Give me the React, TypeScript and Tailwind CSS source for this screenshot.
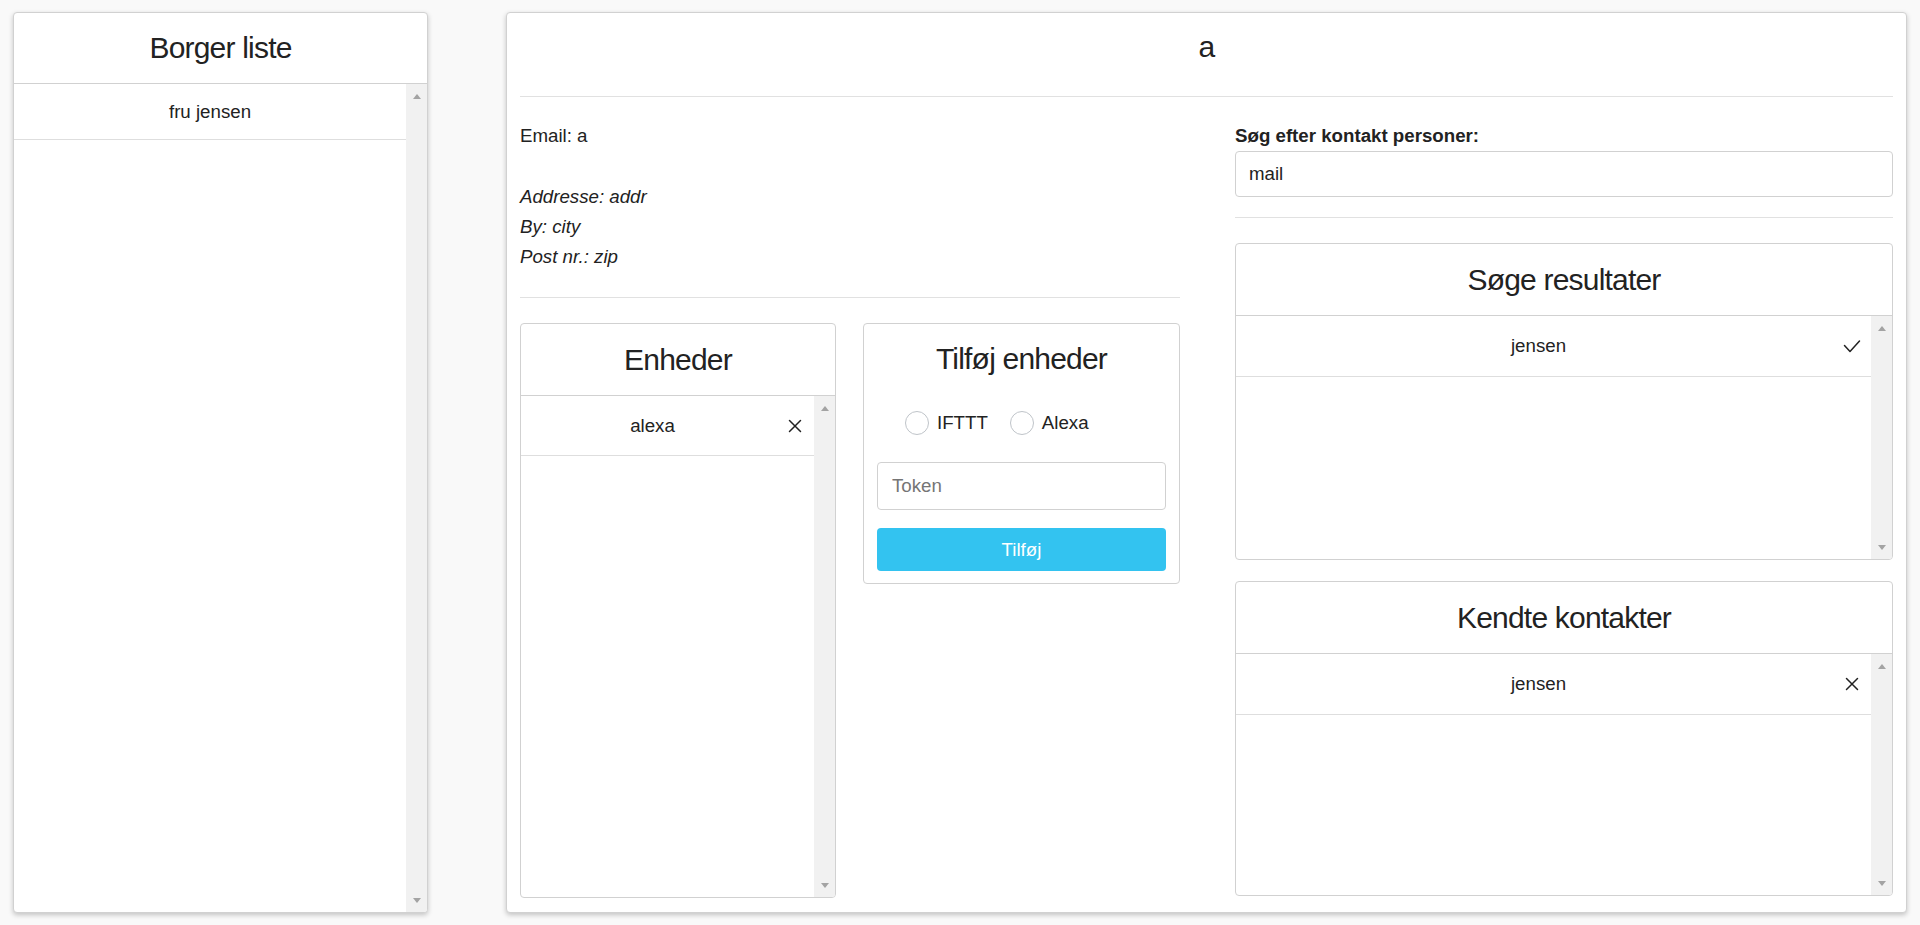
import React from "react";

type RowIcon = "remove" | "check" | null;

type ListItem = {
  id: string;
  name: string;
  icon: RowIcon;
};

const borgere: ListItem[] = [{ id: "b1", name: "fru jensen", icon: null }];
const enheder: ListItem[] = [{ id: "e1", name: "alexa", icon: "remove" }];
const soegeResultater: ListItem[] = [{ id: "s1", name: "jensen", icon: "check" }];
const kendteKontakter: ListItem[] = [{ id: "k1", name: "jensen", icon: "remove" }];

function RemoveIcon() {
  return (
    <svg viewBox="0 0 14 14" fill="none" aria-hidden="true" className="h-[14px] w-[14px]">
      <path d="M1.5 1.5 12.5 12.5M12.5 1.5 1.5 12.5" stroke="#222" strokeWidth="1.5" strokeLinecap="round" />
    </svg>
  );
}

function CheckIcon() {
  return (
    <svg viewBox="0 0 18 14" fill="none" aria-hidden="true" className="h-[14px] w-[18px]">
      <path d="M1.5 6.5 7 12.5 16.5 2" stroke="#222" strokeWidth="1.5" strokeLinecap="round" strokeLinejoin="round" />
    </svg>
  );
}

// Fake scrollbar — headless chrome hides real ones
function Scrollbar() {
  return (
    <div className="flex w-[21px] shrink-0 flex-col items-center justify-between bg-[#f1f1f1] pb-[9px] pt-[10px]">
      <span className="h-0 w-0 border-x-[4.5px] border-b-[5px] border-x-transparent border-b-[#a3a3a3]" />
      <span className="h-0 w-0 border-x-[4.5px] border-t-[5px] border-x-transparent border-t-[#a3a3a3]" />
    </div>
  );
}

function ListPanel({
  title,
  items,
  className,
  rowClassName = "",
}: {
  title: string;
  items: ListItem[];
  className: string;
  rowClassName?: string;
}) {
  return (
    <div className={`flex flex-col overflow-hidden rounded-[4px] border border-[#d1d1d1] bg-white ${className}`}>
      <div className="flex h-[72px] shrink-0 items-center justify-center border-b border-[#d1d1d1] text-[30px] leading-[40px] tracking-[-0.8px]">
        {title}
      </div>
      <div className="flex min-h-0 flex-1">
        <div className="flex-1">
          {items.map((item) => (
            <div
              key={item.id}
              className={`flex h-[60px] items-center border-b border-[#dedede] ${rowClassName}`}
            >
              <span className="flex-1 text-center">{item.name}</span>
              {item.icon && (
                <span className="mr-[8px] flex w-[22px] justify-center">
                  {item.icon === "remove" ? <RemoveIcon /> : <CheckIcon />}
                </span>
              )}
            </div>
          ))}
        </div>
        <Scrollbar />
      </div>
    </div>
  );
}

function Radio({ label }: { label: string }) {
  return (
    <label className="flex items-center gap-[8px]">
      <span className="h-[24px] w-[24px] rounded-full border border-[#bfc4c9] bg-white" />
      <span>{label}</span>
    </label>
  );
}

export default function App() {
  return (
    <div className="flex h-[925px] w-[1920px] gap-[78px] bg-[#f9f9f9] pl-[13px] pt-[12px] font-['Liberation_Sans',Arial,sans-serif] text-[18.7px] leading-[30px] text-[#222]">
      {/* Borger liste */}
      <div className="flex h-[901px] w-[415px] flex-col overflow-hidden rounded-[4px] border border-[#d1d1d1] bg-white shadow-[0_2px_5px_rgba(0,0,0,0.22)]">
        <div className="flex h-[71px] shrink-0 items-center justify-center border-b border-[#d1d1d1] text-[30px] leading-[40px] tracking-[-0.8px]">
          Borger liste
        </div>
        <div className="flex min-h-0 flex-1">
          <div className="flex-1">
            {borgere.map((b) => (
              <div key={b.id} className="flex h-[56px] items-center justify-center border-b border-[#dedede]">
                {b.name}
              </div>
            ))}
          </div>
          <Scrollbar />
        </div>
      </div>

      {/* Borger detaljer */}
      <div className="flex h-[901px] w-[1401px] flex-col rounded-[4px] border border-[#d1d1d1] bg-white px-[13px] shadow-[0_2px_5px_rgba(0,0,0,0.22)]">
        <div className="h-[83px] shrink-0 pt-[14px] text-center text-[30px] leading-[40px] tracking-[-0.8px]">a</div>
        <hr className="border-t border-[#e1e1e1]" />

        <div className="flex gap-[55px] pt-[24px]">
          {/* venstre kolonne */}
          <div className="w-[660px]">
            <p>Email: a</p>
            <div className="mt-[31px] italic">
              <p>Addresse: addr</p>
              <p>By: city</p>
              <p>Post nr.: zip</p>
            </div>
            <hr className="mt-[25px] border-t border-[#e1e1e1]" />
            <div className="mt-[25px] flex items-start gap-[27px]">
              <ListPanel title="Enheder" items={enheder} className="h-[575px] w-[316px]" />

              <div className="flex h-[261px] w-[317px] flex-col rounded-[4px] border border-[#d1d1d1] bg-white px-[13px] pt-[15px]">
                <div className="text-center text-[30px] leading-[40px] tracking-[-0.8px]">Tilføj enheder</div>
                <div className="mt-[29px] flex h-[30px] items-center gap-[22px] pl-[28px]">
                  <Radio label="IFTTT" />
                  <Radio label="Alexa" />
                </div>
                <input
                  type="text"
                  placeholder="Token"
                  className="mt-[24px] h-[48px] w-full rounded-[4px] border border-[#d1d1d1] px-[14px] text-[18.7px] text-[#222] outline-none placeholder:text-[#757575]"
                />
                <button
                  type="button"
                  className="mt-[18px] h-[43px] w-full rounded-[4px] bg-[#33c3f0] text-[18.7px] text-white"
                >
                  Tilføj
                </button>
              </div>
            </div>
          </div>

          {/* højre kolonne */}
          <div className="w-[659px]">
            <label className="block font-bold">Søg efter kontakt personer:</label>
            <input
              type="text"
              defaultValue="mail"
              className="h-[46px] w-full rounded-[4px] border border-[#d1d1d1] px-[13px] text-[18.7px] text-[#222] outline-none"
            />
            <hr className="mt-[20px] border-t border-[#e1e1e1]" />
            <ListPanel
              title="Søge resultater"
              items={soegeResultater}
              className="mt-[25px] h-[317px]"
              rowClassName="h-[61px]"
            />
            <ListPanel
              title="Kendte kontakter"
              items={kendteKontakter}
              className="mt-[21px] h-[315px]"
              rowClassName="h-[61px]"
            />
          </div>
        </div>
      </div>
    </div>
  );
}
